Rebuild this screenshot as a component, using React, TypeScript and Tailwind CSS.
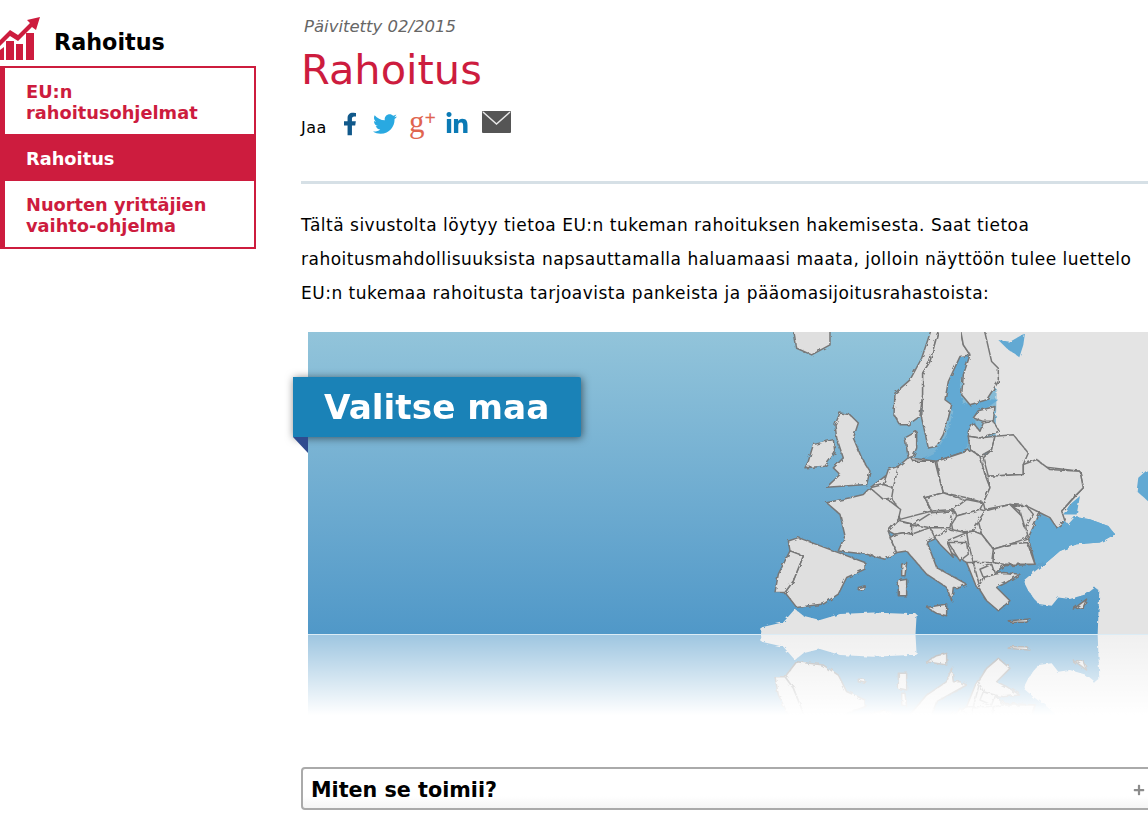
import React from 'react';
import { FaFacebookF, FaTwitter, FaLinkedinIn, FaPlus } from 'react-icons/fa';

const verdana = { fontFamily: '"DejaVu Sans", Verdana, sans-serif' };

// Map shapes, written in 3x coordinates of the area that starts at (740,325)
const seas = [
  '690,90 660,95 620,190 615,240 640,260 620,330 590,380 540,405 590,412 680,378 690,310 715,322 700,280 775,225 720,222 670,240 660,180',
  '775,45 810,50 855,25 850,60 838,97 800,70',
  '1240,420 1195,460 1190,500 1240,545',
];

const outerLand = [
  '725,-20 1240,-20 1240,960 1072,960 1078,800 1065,790 1040,810 990,825 955,820 935,845 895,840 865,800 850,770 880,745 920,715 960,680 1010,660 1080,655 1125,630 1105,605 1050,585 1005,578 985,600 960,580 925,580 900,565 870,600 860,700 760,600 770,200',
  '60,960 65,910 130,895 165,855 190,875 240,888 300,870 400,865 510,870 530,870 525,960',
];

// closes the small gaps between the central European countries
const continent =
  '445,620 390,490 475,425 510,400 590,410 690,375 760,400 850,420 1020,440 1030,490 965,560 900,565 865,640 885,720 790,725 720,790 680,715 640,690 585,640 515,630';

const countries = [
  '160,10 270,10 270,60 215,90 170,70',
  '585,-20 545,100 510,165 465,205 462,270 480,300 505,300 540,275 548,210 548,145 570,110 605,-20',
  '605,-20 570,110 548,145 548,210 545,280 565,370 590,365 610,330 625,280 635,240 615,225 625,170 660,95 690,90 670,60 655,-20',
  '655,-20 670,60 690,90 670,150 665,210 690,240 740,225 775,170 775,130 755,110 725,-20',
  '700,280 715,258 765,245 760,290 730,290',
  '685,320 700,295 720,320 730,295 760,290 778,320 720,340 685,335',
  '685,335 720,340 765,335 755,375 720,395 690,375',
  '765,335 820,330 865,385 850,420 850,450 745,455 730,400 755,375',
  '590,410 680,380 690,375 720,395 735,450 750,490 730,535 680,520 610,505 600,470',
  '745,455 850,450 850,420 890,405 930,435 1020,440 1030,490 1000,520 965,560 975,590 950,610 930,580 900,565 860,545 810,540 735,555 730,535 750,490',
  '510,395 520,410 585,410 600,470 610,505 555,520 575,560 480,585 470,545 455,520 450,490 475,425',
  '390,490 450,530 482,555 475,585 445,620 455,650 470,685 435,705 380,690 295,680 315,635 300,570 260,535 330,520 370,510',
  '285,300 300,265 330,270 355,295 340,340 365,400 390,440 380,480 260,488 300,450 280,430 310,400 300,370 290,340',
  '205,410 220,360 280,345 285,385 255,425 195,430',
  '145,650 175,640 295,685 375,715 375,735 320,760 295,810 250,840 170,850 135,805 160,770 190,695 150,680',
  '150,680 190,695 160,770 135,805 105,805 115,750',
  '430,480 445,435 475,425 460,490',
  '390,490 430,480 460,490 455,520 430,525',
  '495,340 530,320 530,370 520,395 505,400',
  '555,520 610,505 680,530 640,555 575,560',
  '480,590 520,600 575,565 640,560 630,610 570,610 515,600',
  '445,620 475,590 515,600 515,630 490,625 465,630',
  '640,555 680,525 730,535 720,555 650,575',
  '635,600 650,575 720,555 735,560 700,620 640,625',
  '735,560 810,540 850,580 865,640 810,660 760,675 725,630 715,590',
  '810,540 860,545 880,570 855,610 840,560',
  '760,675 810,660 862,655 885,720 840,720 790,720 760,715',
  '450,640 465,630 490,625 515,630 570,610 585,640 560,650 590,730 680,780 660,790 640,790 635,830 620,790 560,750 500,680 470,685',
  '585,640 630,615 680,625 620,650 640,700 600,660',
  '625,655 680,655 685,690 660,710',
  '680,625 700,620 725,630 760,675 755,715 700,715 685,655',
  '680,715 700,715 720,790 710,790',
  '720,735 755,720 765,750 730,760',
  '730,760 765,750 790,745 840,750 800,775 770,790 810,830 775,860 740,830 715,790',
  '805,890 870,885 860,895 810,895',
  '1000,855 1040,825 1030,850',
  '560,850 620,840 620,875 590,868',
  '475,770 500,765 500,815 475,815',
  '485,720 500,715 495,755 485,755',
  '355,790 375,785 370,797 355,797',
];

function MapShapes({ viewBox, id }: { viewBox: string; id: string }) {
  return (
    <svg viewBox={viewBox} preserveAspectRatio="none" className="block w-full h-full blur-[0.4px]">
      <defs>
        {/* roughens the straight polygon edges into a coastline */}
        <filter id={id} x="-5%" y="-5%" width="110%" height="110%" colorInterpolationFilters="sRGB">
          <feTurbulence type="fractalNoise" baseFrequency="0.07" numOctaves="2" seed="4" />
          <feDisplacementMap in="SourceGraphic" scale="11" />
        </filter>
      </defs>
      <g transform="translate(740 325) scale(0.3333)" filter={`url(#${id})`}>
        {outerLand.map((p, i) => (
          <polygon key={i} points={p} fill="#e4e4e4" />
        ))}
        {seas.map((p, i) => (
          <polygon key={i} points={p} fill="#62a9d3" />
        ))}
        <polygon points="890,575 925,582 960,582 985,602 1005,578 1050,585 1105,605 1125,630 1080,655 1010,660 960,680 920,715 880,718 862,700 870,610" fill="#62a9d3" />
        <polygon points="1020,515 990,540 970,570 1010,570" fill="#62a9d3" />
        <polygon points={continent} fill="#dfdfdf" stroke="#777777" strokeWidth={4.5} strokeLinejoin="round" />
        {countries.map((p, i) => (
          <polygon key={i} points={p} fill="#dfdfdf" stroke="#777777" strokeWidth={4.5} strokeLinejoin="round" />
        ))}
      </g>
    </svg>
  );
}

function ChartLogo() {
  return (
    <svg viewBox="0 0 40 60" className="w-10 h-[60px] shrink-0" fill="#cd1c3e">
      <path d="M0 50 L4 47 L4 60 L0 60 Z" />
      <rect x="6" y="41" width="8" height="19" />
      <rect x="16" y="44" width="7" height="16" />
      <rect x="26" y="33" width="8" height="27" />
      <path d="M0 46 L10 36 L18 41 L32 27 L36 30 L40 17 L27 20 L30 23 L18 35 L10 30 L0 40 Z" />
    </svg>
  );
}

const navItems = [
  { label: 'EU:n rahoitusohjelmat', active: false },
  { label: 'Rahoitus', active: true },
  { label: 'Nuorten yrittäjien vaihto-ohjelma', active: false },
];

function Sidebar() {
  return (
    <aside className="w-[256px] shrink-0">
      <div className="flex items-end h-[66px] pb-[6px] gap-[14px]">
        <ChartLogo />
        <h2 className="text-[22.3px] leading-[28px] font-bold text-black mb-[4px]">Rahoitus</h2>
      </div>
      <ul className="border-2 border-l-[5px] border-[#cd1c3e] bg-white">
        {navItems.map((item) => (
          <li
            key={item.label}
            className={`pl-[21px] pr-[40px] text-[17.8px] leading-[21px] font-bold ${
              item.active ? 'bg-[#cd1c3e] text-white pt-[14px] pb-[12px]' : 'text-[#cd1c3e] pt-[13px] pb-[11px]'
            }`}
          >
            {item.label}
          </li>
        ))}
      </ul>
    </aside>
  );
}

function ShareRow() {
  return (
    <div className="flex items-start h-[30px]">
      <span className="text-[16px] tracking-[0.5px] leading-[20px] mt-[7px] text-black w-[42px]">Jaa</span>
      <FaFacebookF className="w-[14px] h-[24px] mt-[1px] text-[#11598b]" />
      <FaTwitter className="w-[24px] h-[24px] mt-[1px] ml-[16px] text-[#29a9e1]" />
      <span className="ml-[12px] w-[26px] flex items-start text-[#e0654f] font-['Liberation_Serif',serif] text-[31px] leading-[22px]">
        g<span className="text-[20px] leading-[14px] font-bold">+</span>
      </span>
      <FaLinkedinIn className="w-[24px] h-[24px] mt-[1px] ml-[10px] text-[#0b7ab5]" />
      <svg viewBox="0 0 29 22" className="w-[29px] h-[22px] ml-[13px]">
        <rect width="29" height="22" rx="1" fill="#555555" />
        <path d="M1 1 L14.5 13 L28 1" fill="none" stroke="#e8e8e8" strokeWidth="1.5" />
      </svg>
    </div>
  );
}

function MapBlock() {
  return (
    <div className="relative mt-[22px] ml-[7px] w-[840px]">
      <div className="h-[303px] bg-gradient-to-b from-[#92c4da] to-[#5098c8] border-b border-[#dcecf5]">
        <MapShapes viewBox="308 332 840 303" id="rough-map" />
      </div>
      <div className="relative h-[80px] overflow-hidden bg-[#5098c8]">
        <div className="h-full -scale-y-100">
          <MapShapes viewBox="308 555 840 80" id="rough-reflection" />
        </div>
        <div className="absolute inset-0 bg-gradient-to-b from-white/45 to-white" />
      </div>
      <div className="absolute left-[-15px] top-[45px] w-[288px] h-[60px] pl-[31px] bg-[#1a82b7] rounded-r-[2px] shadow-[1px_1px_8px_rgba(0,0,0,0.55)] text-white font-bold text-[34.3px] leading-[60px] blur-[0.3px]">
        Valitse maa
      </div>
      <div className="absolute left-[-15px] top-[105px] w-0 h-0 border-t-[16px] border-l-[15px] border-t-[#2f4b8f] border-l-transparent" />
    </div>
  );
}

export default function App() {
  return (
    <div className="flex w-[1148px] h-[814px] overflow-hidden bg-white text-black" style={verdana}>
      <Sidebar />
      <main className="ml-[45px] w-[880px] shrink-0">
        <p className="mt-[17px] pl-[3px] italic text-[16.5px] leading-[20px] text-[#666666]">Päivitetty 02/2015</p>
        <h1 className="mt-[2px] text-[41.5px] leading-[62px] font-normal text-[#cd1c3e]">Rahoitus</h1>
        <div className="mt-[10px]">
          <ShareRow />
        </div>
        <hr className="mt-[40px] border-0 h-[3px] bg-[#d6e0e6]" />
        <p className="mt-[24px] text-[17px] tracking-[0.5px] leading-[34px] pr-[33px]">
          Tältä sivustolta löytyy tietoa EU:n tukeman rahoituksen hakemisesta. Saat tietoa rahoitusmahdollisuuksista
          napsauttamalla haluamaasi maata, jolloin näyttöön tulee luettelo EU:n tukemaa rahoitusta tarjoavista pankeista
          ja pääomasijoitusrahastoista:
        </p>
        <MapBlock />
        <div className="mt-[52px] h-[43px] w-[860px] flex items-center justify-between border-2 border-[#aaaaaa] rounded-[4px] pl-[8px] pr-[14px] pt-[3px] bg-gradient-to-b from-white from-70% to-[#f5f5f5]">
          <span className="text-[20.7px] leading-[26px] font-bold">Miten se toimii?</span>
          <FaPlus className="w-[12px] h-[12px] text-[#8c8c8c]" />
        </div>
      </main>
    </div>
  );
}
